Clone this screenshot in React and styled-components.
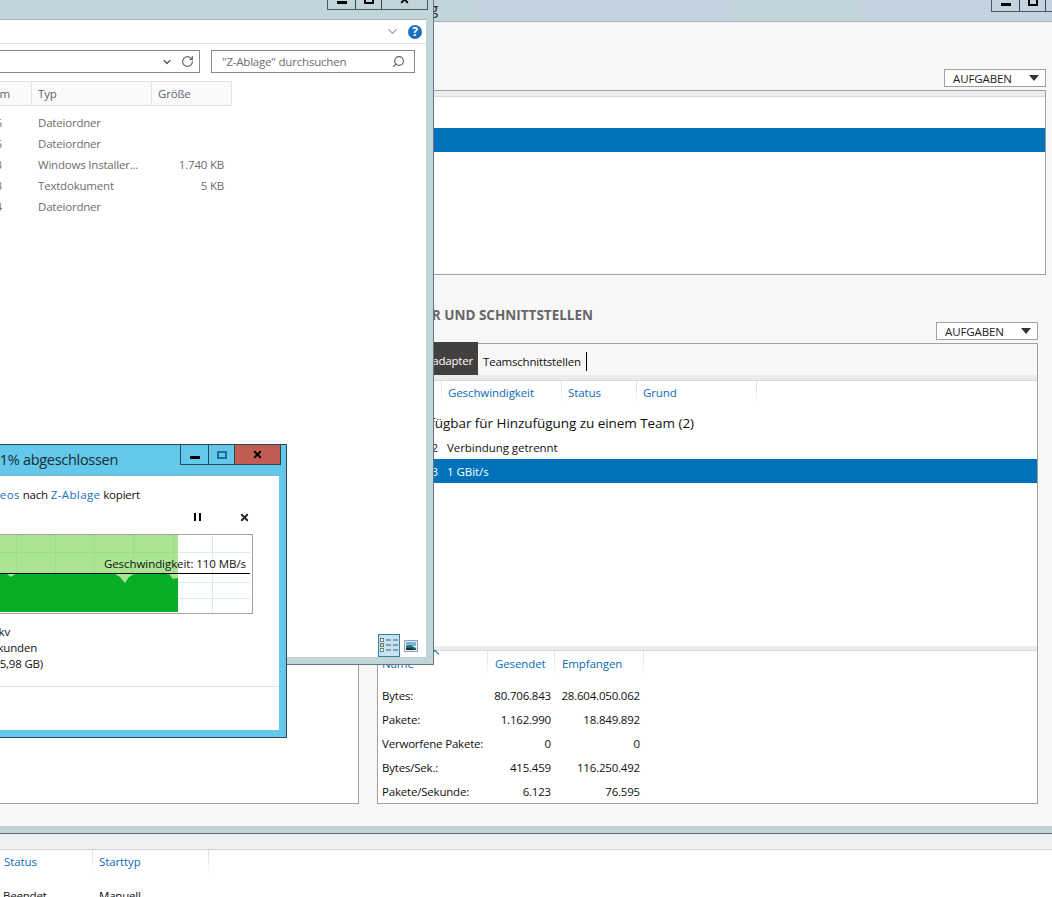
import React from 'react';
import styled, { createGlobalStyle } from 'styled-components';
import { ChevronDown, RotateCw, Search, X } from 'lucide-react';

const GlobalStyle = createGlobalStyle`
  html, body {
    margin: 0;
    padding: 0;
    background: #fff;
  }
  body {
    font-family: "Open Sans", "Noto Sans", sans-serif;
    font-size: 11.5px;
    letter-spacing: -0.2px;
    color: #111;
  }
  * {
    box-sizing: border-box;
  }
`;

const Desktop = styled.div`
  position: relative;
  width: 1052px;
  height: 897px;
  overflow: hidden;
  display: flex;
  flex-direction: column;
`;

/* window chrome */
const WinButtons = styled.div`
  display: flex;
  height: 20px;
  flex: none;
  border: 1px solid ${(p) => p.$line || '#4b5a64'};
  border-top: 0;
`;

const WinButton = styled.div`
  width: ${(p) => p.$w}px;
  display: flex;
  justify-content: center;
  align-items: flex-end;
  padding-bottom: 5px;
  background: ${(p) => p.$bg || 'transparent'};
  & + & {
    border-left: 1px solid ${(p) => p.$line || '#4b5a64'};
  }
`;

const MinIcon = styled.div`
  width: 10px;
  height: 3px;
  background: #000;
`;

const RestoreIcon = styled.div`
  width: 10px;
  height: 8px;
  border: 2px solid ${(p) => p.$color || '#000'};
`;

const CloseIcon = styled(X)`
  margin-bottom: -1px;
`;

const WindowControls = ({ line, accent, closeBg }) => (
  <WinButtons $line={line}>
    <WinButton $w={27} $line={line}>
      <MinIcon />
    </WinButton>
    <WinButton $w={26} $line={line}>
      <RestoreIcon $color={accent} />
    </WinButton>
    <WinButton $w={46} $line={line} $bg={closeBg}>
      <CloseIcon size={11} strokeWidth={4} color="#000" />
    </WinButton>
  </WinButtons>
);

/* text whose start is cut off by the screen or a window on top */
const EndAligned = styled.div`
  width: ${(p) => p.$end}px;
  flex: none;
  display: flex;
  justify-content: flex-end;
  white-space: nowrap;
`;

/* NIC teaming window */
const ManagerWindow = styled.div`
  height: 826px;
  flex: none;
  background: #f7f7f7;
  display: flex;
  flex-direction: column;
`;

const ManagerTitle = styled.div`
  height: 22px;
  flex: none;
  display: flex;
  justify-content: space-between;
  font-size: 15px;
  color: #222;
  line-height: 16px;
  border-bottom: 1px solid #a9b5bd;
  background: linear-gradient(
    to right,
    #c1d5da 0 475px,
    #c5d3df 475px 732px,
    #c1d5da 732px 860px,
    #c5d3df 860px
  );
`;

const ManagerButtons = styled.div`
  margin-top: -8px;
  margin-right: -40px;
`;

const TaskRow = styled.div`
  display: flex;
  justify-content: flex-end;
  margin-top: ${(p) => p.$top || 0}px;
  padding-right: ${(p) => p.$right || 0}px;
`;

const TaskButton = styled.div`
  width: 102px;
  height: 18px;
  display: flex;
  align-items: center;
  justify-content: space-between;
  padding: 0 6px 0 8px;
  background: #fff;
  border: 1px solid #a0a0a0;
  font-size: 11.5px;
  letter-spacing: -0.1px;
  color: #222;
`;

const TaskArrow = styled.div`
  width: 0;
  height: 0;
  border-left: 5px solid transparent;
  border-right: 5px solid transparent;
  border-top: 6px solid #333;
`;

const TeamsPanel = styled.div`
  height: 185px;
  margin: 3px 6px 0 20px;
  flex: none;
  background: #fff;
  border: 1px solid #a0a0a0;
`;

const GreyBar = styled.div`
  height: ${(p) => p.$h || 6}px;
  flex: none;
  background: #ececec;
  border-bottom: 1px solid #d8d8d8;
`;

const SelectedBand = styled.div`
  height: 24px;
  margin-top: 31px;
  background: #0072bc;
`;

const Columns = styled.div`
  display: grid;
  grid-template-columns: 379px 661px;
  column-gap: 18px;
  margin: 32px 0 0 -20px;
  height: 497px;
`;

const LeftColumn = styled.div`
  padding-top: 36px;
  display: flex;
`;

const LeftPanel = styled.div`
  flex: 1;
  background: #fff;
  border: 1px solid #a0a0a0;
`;

const RightColumn = styled.div`
  display: flex;
  flex-direction: column;
`;

const Heading = styled.div`
  height: 15px;
  line-height: 16px;
  font-size: 13.5px;
  font-weight: 700;
  letter-spacing: 0;
  color: #666;
  white-space: nowrap;
  display: flex;
`;

const AdapterPanel = styled.div`
  flex: 1;
  margin-top: 3px;
  min-height: 0;
  background: #fff;
  border: 1px solid #a0a0a0;
  display: flex;
  flex-direction: column;
`;

const TabStrip = styled.div`
  height: 31px;
  flex: none;
  display: flex;
  align-items: flex-start;
  background: #f7f7f7;
`;

const ActiveTab = styled.div`
  width: 100px;
  height: 33px;
  margin-top: -2px;
  padding: 4px 5px 0 0;
  display: flex;
  justify-content: flex-end;
  align-items: center;
  white-space: nowrap;
  background: #434140;
  color: #fff;
`;

const Tab = styled.div`
  height: 31px;
  margin-left: 5px;
  padding-top: 3px;
  display: flex;
  align-items: center;
  color: #111;
`;

const TabCursor = styled.div`
  width: 1px;
  height: 19px;
  margin: 8px 0 0 5px;
  background: #000;
`;

const ListHead = styled.div`
  display: grid;
  grid-template-columns: ${(p) => p.$cols};
  height: ${(p) => p.$h || 24}px;
  line-height: ${(p) => p.$h || 24}px;
  flex: none;
`;

const HeadCell = styled.div`
  position: relative;
  padding-left: ${(p) => p.$pad ?? 6}px;
  letter-spacing: -0.1px;
  color: #0b6cb5;
  white-space: nowrap;
  border-right: 1px solid;
  border-image: linear-gradient(#dcdcdc, #fff) 1;
`;

const SortMark = styled.div`
  position: absolute;
  left: 54px;
  top: 0;
  width: 6px;
  height: 6px;
  border-left: 1px solid #0b6cb5;
  border-top: 1px solid #0b6cb5;
  transform: rotate(45deg);
`;

const GroupLabel = styled(EndAligned)`
  height: 20px;
  margin-top: 8px;
  margin-bottom: 2px;
  line-height: 20px;
  font-size: 13.5px;
  letter-spacing: -0.05px;
  flex: none;
`;

const AdapterRow = styled.div`
  display: grid;
  grid-template-columns: 60px 1fr;
  height: 24px;
  flex: none;
  align-items: center;
  white-space: nowrap;
  letter-spacing: -0.05px;
  background: ${(p) => (p.$selected ? '#0072bc' : 'transparent')};
  color: ${(p) => (p.$selected ? '#fff' : '#111')};
`;

const AdapterName = styled.div`
  display: flex;
  justify-content: flex-end;
`;

const AdapterSpeed = styled.div`
  padding-left: 9px;
`;

const Spacer = styled.div`
  flex: 1;
`;

const StatRows = styled.div`
  margin-top: 7px;
`;

const StatRow = styled.div`
  display: grid;
  grid-template-columns: 110px 67px 89px;
  height: 24px;
  align-items: center;
  white-space: nowrap;
`;

const StatLabel = styled.div`
  padding-left: 4px;
`;

const StatValue = styled.div`
  text-align: right;
  padding-right: 4px;
`;

/* services window at the bottom */
const ServicesWindow = styled.div`
  flex: 1;
  background: #fff;
  display: flex;
  flex-direction: column;
`;

const ServicesFrame = styled.div`
  height: 8px;
  flex: none;
  background: #c1d3da;
  border-top: 1px solid #c9c9c9;
  border-bottom: 1px solid #5e6c75;
`;

const ServicesBand = styled.div`
  height: 16px;
  flex: none;
  background: #f0f0f0;
  border-bottom: 1px solid #cfcfcf;
`;

const ServiceRow = styled.div`
  display: grid;
  grid-template-columns: 93px 116px;
  margin-top: 10px;
  line-height: 24px;
  white-space: nowrap;
`;

const ServiceCell = styled.div`
  padding-left: ${(p) => p.$pad}px;
`;

/* explorer */
const ExplorerWindow = styled.div`
  position: absolute;
  left: -120px;
  top: -20px;
  width: 554px;
  height: 685px;
  padding: 0 7px 7px 0;
  display: flex;
  flex-direction: column;
  background: #c0d4da;
  border-right: 1px solid #66757e;
  border-bottom: 1px solid #66757e;
`;

const ExplorerTitle = styled.div`
  height: 39px;
  flex: none;
  padding: 10px 5px 0 0;
  display: flex;
  justify-content: flex-end;
  margin-right: -7px;
`;

const ExplorerBody = styled.div`
  flex: 1;
  min-height: 0;
  display: flex;
  flex-direction: column;
  background: #fff;
  border-top: 1px solid #a8b5bc;
`;

const Ribbon = styled.div`
  height: 24px;
  flex: none;
  display: flex;
  align-items: center;
  justify-content: flex-end;
  gap: 8px;
  padding-right: 4px;
  border-bottom: 1px solid #e3e3e3;
`;

const HelpBadge = styled.div`
  width: 14px;
  height: 14px;
  border-radius: 50%;
  background: #1a6fc0;
  color: #fff;
  font-size: 12px;
  font-weight: 700;
  line-height: 14px;
  text-align: center;
`;

const NavRow = styled.div`
  display: flex;
  gap: 11px;
  margin-top: 6px;
  flex: none;
`;

const NavBox = styled.div`
  width: ${(p) => p.$w}px;
  height: 23px;
  display: flex;
  align-items: center;
  justify-content: flex-end;
  gap: 8px;
  padding: 0 ${(p) => p.$pad}px 0 10px;
  border: 1px solid #8a8a8a;
  color: #6d6d6d;
`;

const SearchHint = styled.div`
  flex: 1;
`;

const SearchIcon = styled(Search)`
  transform: scaleX(-1);
`;

const FileHead = styled.div`
  display: grid;
  grid-template-columns: 152px 120px 80px;
  width: 352px;
  height: 25px;
  margin-top: 8px;
  flex: none;
  background: #fafafa;
  border-top: 1px solid #e2e2e2;
  border-bottom: 1px solid #e2e2e2;
  color: #5a6470;
`;

const FileHeadCell = styled.div`
  display: flex;
  align-items: center;
  justify-content: ${(p) => (p.$end ? 'flex-end' : 'flex-start')};
  padding: 0 ${(p) => (p.$end ? 21 : 0)}px 0 ${(p) => (p.$end ? 0 : 6)}px;
  border-right: 1px solid #e2e2e2;
`;

const FileRows = styled.div`
  margin-top: 6px;
`;

const FileRow = styled.div`
  display: grid;
  grid-template-columns: 151px 120px 81px;
  height: 21px;
  align-items: center;
  color: #6d6d6d;
  white-space: nowrap;
`;

const FileDate = styled.div`
  text-align: right;
  padding-right: 29px;
`;

const FileType = styled.div`
  padding-left: 7px;
`;

const FileSize = styled.div`
  text-align: right;
  padding-right: 8px;
`;

const ViewBar = styled.div`
  margin-top: auto;
  height: 23px;
  flex: none;
  display: flex;
  justify-content: flex-end;
  align-items: center;
  gap: 4px;
  padding-right: 8px;
`;

const ViewToggle = styled.div`
  width: 22px;
  height: 23px;
  display: flex;
  align-items: center;
  justify-content: center;
  background: #c4e2f3;
  border: 1px solid #3a7f95;
`;

/* copy dialog */
const CopyDialog = styled.div`
  position: absolute;
  left: -120px;
  top: 444px;
  width: 407px;
  height: 294px;
  padding: 0 7px 7px 0;
  display: flex;
  flex-direction: column;
  background: #63c8ea;
  border: 1px solid #2f4552;
`;

const CopyTitle = styled.div`
  height: 30px;
  flex: none;
  display: flex;
  justify-content: space-between;
  margin-right: -2px;
`;

const CopyHeadline = styled(EndAligned)`
  height: 28px;
  align-items: center;
  font-size: 14.5px;
  letter-spacing: -0.3px;
  color: #1c2b33;
`;

const CopyBody = styled.div`
  flex: 1;
  min-height: 0;
  display: flex;
  flex-direction: column;
  background: #fff;
  border-top: 1px solid #7fb6d2;
`;

const CopyLine = styled(EndAligned)`
  height: 16px;
  line-height: 16px;
  margin-top: ${(p) => p.$top || 0}px;
  gap: 3px;
`;

const CopyLink = styled.span`
  letter-spacing: 0.4px;
  color: #1a6fc0;
`;

const CopyControls = styled.div`
  height: 16px;
  margin-top: 6px;
  display: flex;
  justify-content: flex-end;
  align-items: center;
  gap: 38px;
  padding-right: 29px;
`;

const PauseIcon = styled.div`
  width: 7px;
  height: 8px;
  border-left: 2px solid #000;
  border-right: 2px solid #000;
`;

const ChartBox = styled.div`
  position: relative;
  width: 372px;
  height: 80px;
  margin-top: 9px;
  flex: none;
  border: 1px solid #a5a5a5;
`;

const ChartSvg = styled.svg`
  display: block;
`;

const ChartSpeed = styled.div`
  position: absolute;
  right: 6px;
  top: 21px;
  line-height: 16px;
  letter-spacing: -0.06px;
  white-space: nowrap;
  color: #111;
`;

const CopyRule = styled.div`
  height: 1px;
  margin-top: 14px;
  background: #e2e2e2;
`;

const SpeedChart = () => {
  const lines = [16, 55, 94, 133, 173];
  const rows = [552, 582, 598];
  return (
    <ChartSvg width="370" height="78" viewBox="-118 535 370 78">
      {rows.map((y) => (
        <line key={y} x1="178" x2="250" y1={y + 0.5} y2={y + 0.5} stroke="#d5f2d8" />
      ))}
      <line x1="212.5" x2="212.5" y1="535" y2="613" stroke="#d5f2d8" />
      <rect x="-118" y="535" width="296" height="55" fill="#abe594" />
      {lines.map((x) => (
        <line key={x} x1={x + 0.5} x2={x + 0.5} y1="535" y2="590" stroke="#9be088" />
      ))}
      <line x1="-118" x2="178" y1="552.5" y2="552.5" stroke="#9be088" />
      <polygon
        fill="#06af26"
        points="-118,574 7,574 11,577 15,574 115,574 120,577 125,583 129,577 134,574 169,574 173,579 178,578 178,612 -118,612"
      />
      <line x1="-118" x2="250" y1="573.5" y2="573.5" stroke="#000" />
    </ChartSvg>
  );
};

const DetailsViewIcon = () => (
  <svg width="18" height="15" viewBox="0 0 18 15">
    <rect x="0.5" y="0.5" width="3" height="3" fill="#fff" stroke="#6b7f8c" />
    <rect x="0.5" y="5.5" width="3" height="3" fill="#f5d27a" stroke="#6b7f8c" />
    <rect x="0.5" y="10.5" width="3" height="3" fill="#fff" stroke="#6b7f8c" />
    <path d="M6 2h5M13 2h5M6 7h5M13 7h5M6 12h5M13 12h5" stroke="#4e5f6b" fill="none" />
  </svg>
);

const PictureViewIcon = () => (
  <svg width="14" height="12" viewBox="0 0 14 12">
    <rect x="0.5" y="0.5" width="13" height="11" fill="#e8eef5" stroke="#8f9fb5" />
    <rect x="2" y="2" width="10" height="4" fill="#6fb6e6" />
    <path d="M2 6l4-1 6 3v2H2z" fill="#2e6d5a" />
    <path d="M2 8l5 0 5 2H2z" fill="#1c2f3a" />
  </svg>
);

const files = [
  { date: '12.04.2016 10:26', type: 'Dateiordner', size: '' },
  { date: '12.04.2016 10:26', type: 'Dateiordner', size: '' },
  { date: '03.11.2015 14:13', type: 'Windows Installer...', size: '1.740 KB' },
  { date: '03.11.2015 14:13', type: 'Textdokument', size: '5 KB' },
  { date: '09.02.2016 11:34', type: 'Dateiordner', size: '' },
];

const stats = [
  ['Bytes:', '80.706.843', '28.604.050.062'],
  ['Pakete:', '1.162.990', '18.849.892'],
  ['Verworfene Pakete:', '0', '0'],
  ['Bytes/Sek.:', '415.459', '116.250.492'],
  ['Pakete/Sekunde:', '6.123', '76.595'],
];

const Tasks = ({ top, right }) => (
  <TaskRow $top={top} $right={right}>
    <TaskButton>
      AUFGABEN
      <TaskArrow />
    </TaskButton>
  </TaskRow>
);

const App = () => (
  <Desktop>
    <GlobalStyle />

    <ManagerWindow>
      <ManagerTitle>
        <EndAligned $end={438}>NIC-Teamvorgang</EndAligned>
        <ManagerButtons>
          <WindowControls />
        </ManagerButtons>
      </ManagerTitle>
      <Tasks top={47} right={6} />
      <TeamsPanel>
        <GreyBar />
        <SelectedBand />
      </TeamsPanel>
      <Columns>
        <LeftColumn>
          <LeftPanel />
        </LeftColumn>
        <RightColumn>
          <Heading>
            <EndAligned $end={216}>ADAPTER UND SCHNITTSTELLEN</EndAligned>
          </Heading>
          <Tasks />
          <AdapterPanel>
            <TabStrip>
              <ActiveTab>Netzwerkadapter</ActiveTab>
              <Tab>Teamschnittstellen</Tab>
              <TabCursor />
            </TabStrip>
            <GreyBar $h={6} />
            <ListHead $cols="64px 120px 75px 120px">
              <HeadCell>Adapter</HeadCell>
              <HeadCell>Geschwindigkeit</HeadCell>
              <HeadCell>Status</HeadCell>
              <HeadCell>Grund</HeadCell>
            </ListHead>
            <GroupLabel $end={316}>Verfügbar für Hinzufügung zu einem Team (2)</GroupLabel>
            <AdapterRow>
              <AdapterName>Ethernet 2</AdapterName>
              <AdapterSpeed>Verbindung getrennt</AdapterSpeed>
            </AdapterRow>
            <AdapterRow $selected>
              <AdapterName>Ethernet 3</AdapterName>
              <AdapterSpeed>1 GBit/s</AdapterSpeed>
            </AdapterRow>
            <Spacer />
            <GreyBar $h={5} />
            <ListHead $cols="110px 67px 89px" $h={25}>
              <HeadCell $pad={4}>
                Name
                <SortMark />
              </HeadCell>
              <HeadCell $pad={7}>Gesendet</HeadCell>
              <HeadCell $pad={7}>Empfangen</HeadCell>
            </ListHead>
            <StatRows>
              {stats.map(([label, sent, received]) => (
                <StatRow key={label}>
                  <StatLabel>{label}</StatLabel>
                  <StatValue>{sent}</StatValue>
                  <StatValue>{received}</StatValue>
                </StatRow>
              ))}
            </StatRows>
          </AdapterPanel>
        </RightColumn>
      </Columns>
    </ManagerWindow>

    <ServicesWindow>
      <ServicesFrame />
      <ServicesBand />
      <ListHead $cols="93px 116px">
        <HeadCell $pad={4}>Status</HeadCell>
        <HeadCell $pad={6}>Starttyp</HeadCell>
      </ListHead>
      <ServiceRow>
        <ServiceCell $pad={3}>Beendet</ServiceCell>
        <ServiceCell $pad={6}>Manuell</ServiceCell>
      </ServiceRow>
    </ServicesWindow>

    <ExplorerWindow>
      <ExplorerTitle>
        <WindowControls />
      </ExplorerTitle>
      <ExplorerBody>
        <Ribbon>
          <ChevronDown size={15} strokeWidth={2} color="#9aa5ad" />
          <HelpBadge>?</HelpBadge>
        </Ribbon>
        <NavRow>
          <NavBox $w={320} $pad={5}>
            <ChevronDown size={12} strokeWidth={2.5} color="#555" />
            <RotateCw size={13} strokeWidth={2.2} color="#666" />
          </NavBox>
          <NavBox $w={204} $pad={9}>
            <SearchHint>"Z-Ablage" durchsuchen</SearchHint>
            <SearchIcon size={13} strokeWidth={2.2} color="#666" />
          </NavBox>
        </NavRow>
        <FileHead>
          <FileHeadCell $end>Änderungsdatum</FileHeadCell>
          <FileHeadCell>Typ</FileHeadCell>
          <FileHeadCell>Größe</FileHeadCell>
        </FileHead>
        <FileRows>
          {files.map((file, i) => (
            <FileRow key={i}>
              <FileDate>{file.date}</FileDate>
              <FileType>{file.type}</FileType>
              <FileSize>{file.size}</FileSize>
            </FileRow>
          ))}
        </FileRows>
        <ViewBar>
          <ViewToggle>
            <DetailsViewIcon />
          </ViewToggle>
          <PictureViewIcon />
        </ViewBar>
      </ExplorerBody>
    </ExplorerWindow>

    <CopyDialog>
      <CopyTitle>
        <CopyHeadline $end={237}>81% abgeschlossen</CopyHeadline>
        <WindowControls line="#2f4552" accent="#1f6f96" closeBg="#c25b52" />
      </CopyTitle>
      <CopyBody>
        <CopyLine $end={259} $top={11}>
          <span>
            <CopyLink>Videos</CopyLink> nach <CopyLink>Z-Ablage</CopyLink> kopiert
          </span>
        </CopyLine>
        <CopyControls>
          <PauseIcon />
          <X size={11} strokeWidth={4} color="#222" />
        </CopyControls>
        <ChartBox>
          <SpeedChart />
          <ChartSpeed>Geschwindigkeit: 110 MB/s</ChartSpeed>
        </ChartBox>
        <CopyLine $end={129} $top={10}>Name: video.mkv</CopyLine>
        <CopyLine $end={156}>Zeit: Etwa 30 Sekunden</CopyLine>
        <CopyLine $end={162}>Elemente: 1 (5,98 GB)</CopyLine>
        <CopyRule />
      </CopyBody>
    </CopyDialog>
  </Desktop>
);

export default App;
